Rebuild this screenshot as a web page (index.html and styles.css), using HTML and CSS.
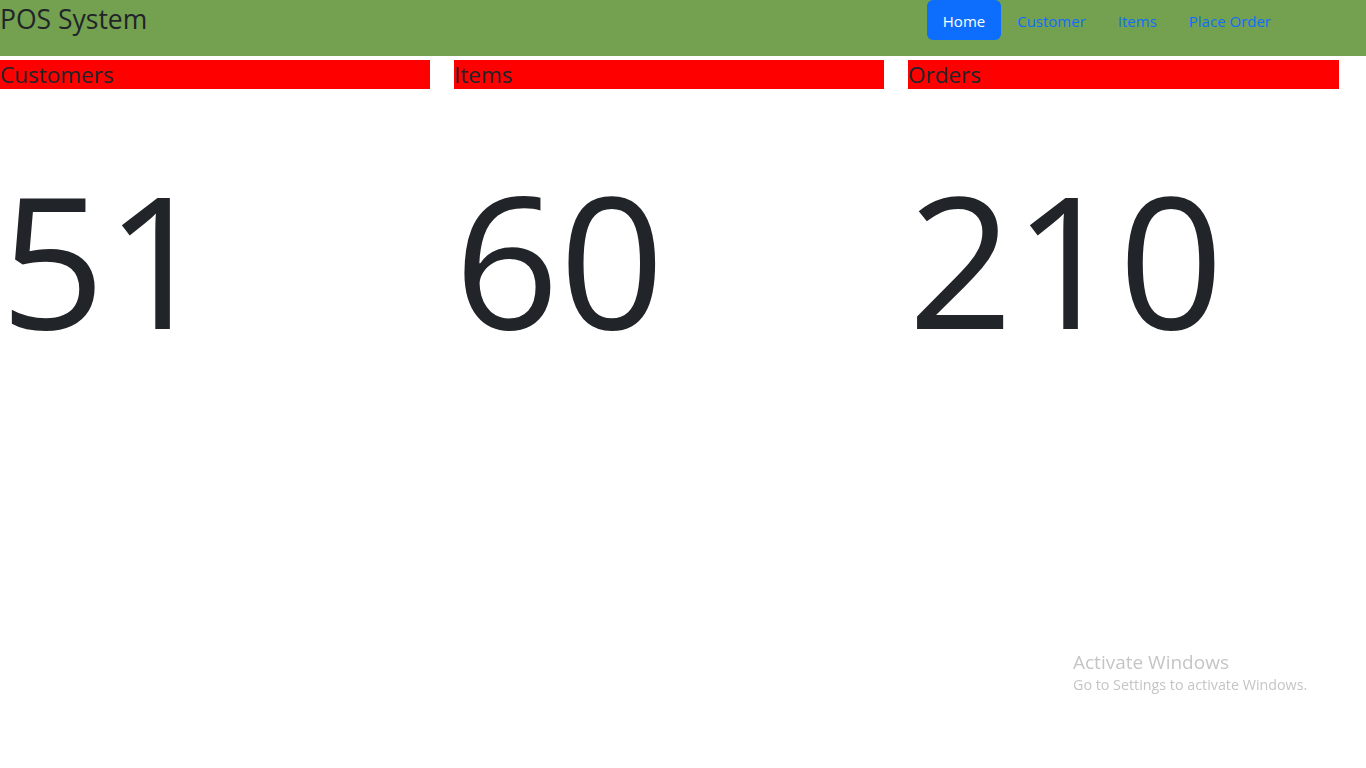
FILE: index.html
```html
<!DOCTYPE html>
<html lang="en">
<head>
<meta charset="utf-8">
<title>POS System</title>
<link rel="stylesheet" href="styles.css">
</head>
<body>
<header class="navbar">
  <a class="brand" href="#">POS System</a>
  <nav class="nav">
    <a class="nav-link active" href="#">Home</a>
    <a class="nav-link" href="#">Customer</a>
    <a class="nav-link" href="#">Items</a>
    <a class="nav-link" href="#">Place Order</a>
  </nav>
</header>
<main class="stats">
  <section class="stat">
    <h4 class="stat-title">Customers</h4>
    <div class="stat-value">51</div>
  </section>
  <section class="stat">
    <h4 class="stat-title">Items</h4>
    <div class="stat-value">60</div>
  </section>
  <section class="stat">
    <h4 class="stat-title">Orders</h4>
    <div class="stat-value">210</div>
  </section>
</main>
<div class="watermark">
  <div class="wm-title">Activate Windows</div>
  <div class="wm-sub">Go to Settings to activate Windows.</div>
</div>
</body>
</html>
```
FILE: styles.css
```css
* { box-sizing: border-box; }
html, body { margin: 0; padding: 0; }
body {
  font-family: "Open Sans", "Noto Sans", sans-serif;
  color: #212529;
  background: #fff;
  font-size: 16px;
  line-height: 1.5;
}
.navbar {
  height: 56px;
  background: #74a14f;
  display: flex;
  justify-content: space-between;
  align-items: flex-start;
  padding-right: 79px;
}
.brand {
  font-size: 26.5px;
  line-height: 38px;
  color: #212529;
  text-decoration: none;
}
.nav { display: flex; }
.nav-link {
  display: block;
  padding: 9px 16px 7px;
  font-size: 15px;
  line-height: 24px;
  color: #0d6efd;
  text-decoration: none;
  border-radius: 6px;
}
.nav-link.active { background: #0d6efd; color: #fff; }
.stats {
  display: grid;
  grid-template-columns: 430px 430px 431px;
  column-gap: 24px;
  margin-top: 4px;
}
.stat-title {
  margin: 0;
  background: #ff0000;
  font-size: 22.5px;
  font-weight: 400;
  line-height: 29px;
}
.stat-value {
  font-size: 184px;
  line-height: 1.2;
  margin-top: 59px;
}
.watermark {
  position: fixed;
  left: 1073px;
  top: 649px;
  color: #c5c5c5;
  pointer-events: none;
}
.wm-title { font-size: 19px; line-height: 26px; }
.wm-sub { font-size: 14.3px; line-height: 20px; }
```
